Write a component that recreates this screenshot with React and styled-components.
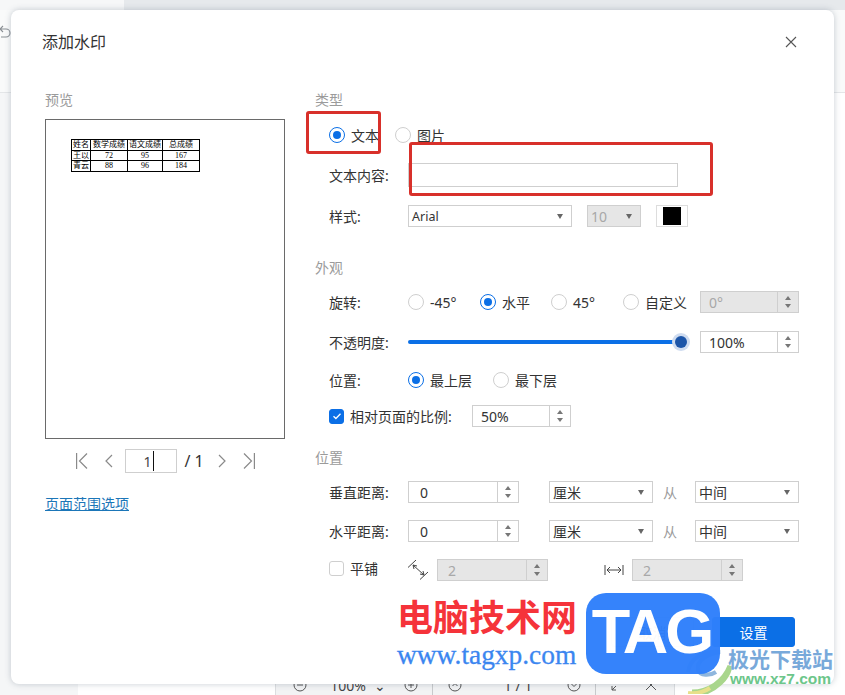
import React from 'react';
import styled, { createGlobalStyle } from 'styled-components';

const GlobalStyle = createGlobalStyle`
  html, body { margin: 0; padding: 0; }
  body {
    font-family: "Noto Sans", "Noto Sans CJK SC", sans-serif;
    font-size: 14px;
    color: #333;
  }
  * { box-sizing: border-box; }
`;

const Page = styled.div`
  position: relative;
  width: 845px;
  height: 695px;
  overflow: hidden;
  display: flex;
  flex-direction: column;
  background: #fff;
`;

const TopStrip = styled.div`
  height: 10px;
  flex: none;
  display: flex;
  background: #e6e9ec;
`;

const TopStripLeft = styled.div`
  width: 124px;
  background: #f6f7f8;
`;

const Ribbon = styled.div`
  height: 83px;
  flex: none;
  padding: 14px 0 0 0;
  background: #f9fafa;
  border-bottom: 1px solid #e4e6e8;
  color: #8a8f94;
`;

const Workspace = styled.div`
  flex: 1;
  display: flex;
  align-items: flex-end;
  background: #fff;
`;

const Sidebar = styled.div`
  width: 78px;
  height: 100%;
  background: #f5f6f7;
  flex: none;
`;

const ZoomBar = styled.div`
  margin-left: 197px;
  width: 400px;
  height: 20px;
  display: flex;
  align-items: center;
  background: #f2f3f4;
  border-left: 1px solid #dcdee0;
  border-right: 1px solid #dcdee0;
  color: #444;
  font-size: 14px;
`;

const ZoomSlot = styled.span`
  flex: none;
  display: flex;
  justify-content: center;
  width: ${({ $w }) => $w}px;
  height: 20px;
  align-items: center;
  ${({ $divider }) => $divider && 'border-right: 1px solid #c8cacc;'}
`;

const Dialog = styled.div`
  position: absolute;
  left: 11px;
  top: 10px;
  width: 823px;
  height: 674px;
  background: #fff;
  border-radius: 8px;
  box-shadow: 0 0 6px rgba(60, 80, 100, 0.28);
  display: flex;
  flex-direction: column;
`;

const Header = styled.div`
  height: 80px;
  flex: none;
  display: flex;
  justify-content: space-between;
  padding: 20px 37px 0 31px;
`;

const Title = styled.div`
  font-size: 16px;
  line-height: 24px;
  color: #333;
`;

const CloseButton = styled.button`
  width: 12px;
  height: 24px;
  padding: 0;
  border: none;
  background: none;
  color: #555;
  display: flex;
  align-items: center;
`;

const Body = styled.div`
  display: grid;
  grid-template-columns: 270px 484px;
  padding-left: 34px;
`;

const SectionLabel = styled.div`
  line-height: 20px;
  height: 20px;
  font-size: 14px;
  color: #9b9b9b;
  margin-top: ${({ $mt }) => $mt || 0}px;
`;

const PreviewBox = styled.div`
  margin-top: 9px;
  width: 240px;
  height: 320px;
  border: 1px solid #6a6a6a;
  padding: 19px 0 0 25px;
`;

const SheetTable = styled.table`
  border-collapse: collapse;
  table-layout: fixed;
  width: 128px;
  font-family: "Liberation Serif", "Noto Sans CJK SC", serif;
  font-size: 8px;
  color: #000;

  td {
    border: 1px solid #000;
    height: 10.6px;
    padding: 0;
    line-height: 9px;
    text-align: center;
    overflow: hidden;
    white-space: nowrap;
  }
`;

const Pager = styled.div`
  margin-top: 10px;
  width: 240px;
  height: 24px;
  display: flex;
  justify-content: center;
  align-items: center;
  color: #8a8a8a;
`;

const PagerIcon = styled.svg`
  flex: none;
  margin-left: ${({ $ml }) => $ml || 0}px;
`;

const PageInput = styled.div`
  margin-left: 12px;
  width: 52px;
  height: 24px;
  border: 1px solid #cfcfcf;
  display: flex;
  align-items: center;
  justify-content: flex-end;
  padding-right: 22px;
  font-size: 14px;
  color: #444;
`;

const Caret = styled.span`
  width: 1px;
  height: 20px;
  margin-left: 1px;
  background: #111;
  flex: none;
`;

const PageTotal = styled.span`
  margin-left: 8px;
  font-size: 16px;
  color: #333;
  white-space: nowrap;
  width: 19px;
`;

const RangeLink = styled.a`
  display: block;
  margin-top: 21px;
  line-height: 20px;
  font-size: 14px;
  color: #1b76b8;
  text-decoration: underline;
`;

const Row = styled.div`
  display: flex;
  align-items: center;
  height: 24px;
  padding-left: 14px;
  margin-top: ${({ $mt }) => $mt || 0}px;
`;

const RowLabel = styled.span`
  flex: none;
  width: 79px;
  font-size: 14px;
  color: #333;
`;

const Option = styled.label`
  flex: none;
  display: flex;
  align-items: center;
  gap: 6px;
  width: ${({ $w }) => $w}px;
  font-size: 14px;
  color: #333;
  white-space: nowrap;
`;

const Radio = styled.span`
  flex: none;
  width: 16px;
  height: 16px;
  border-radius: 50%;
  border: 1px solid ${({ $on }) => ($on ? '#0b6fe6' : '#cfcfcf')};
  display: flex;
  align-items: center;
  justify-content: center;

  &::after {
    content: '';
    width: 8px;
    height: 8px;
    border-radius: 50%;
    background: ${({ $on }) => ($on ? '#0b6fe6' : 'transparent')};
  }
`;

const CheckBox = styled.span`
  flex: none;
  width: 15px;
  height: 15px;
  margin-bottom: ${({ $lift }) => ($lift ? 4 : 0)}px;
  border-radius: 3px;
  border: 1px solid ${({ $on }) => ($on ? '#0b6fe6' : '#cfcfcf')};
  background: ${({ $on }) => ($on ? '#0b6fe6' : '#fff')};
  color: #fff;
  display: flex;
  align-items: center;
  justify-content: center;
`;

const TextField = styled.div`
  width: 270px;
  height: 24px;
  border: 1px solid #cfcfcf;
`;

const Field = styled.div`
  flex: none;
  display: flex;
  align-items: center;
  width: ${({ $w }) => $w}px;
  height: 22px;
  margin-left: ${({ $ml }) => $ml || 0}px;
  border: 1px solid #cfcfcf;
  background: ${({ $off }) => ($off ? '#e6e6e6' : '#fff')};
  color: ${({ $off }) => ($off ? '#a8a8a8' : '#333')};
  font-size: ${({ $size }) => $size || 14}px;
`;

const FieldText = styled.span`
  flex: 1;
  padding-left: ${({ $pl }) => $pl}px;
  white-space: nowrap;
`;

const SelectCaret = styled.span`
  flex: none;
  width: 0;
  height: 0;
  margin-right: 8px;
  border-left: 3px solid transparent;
  border-right: 3px solid transparent;
  border-top: 5px solid #666;
`;

const SpinArrows = styled.span`
  flex: none;
  width: 21px;
  height: 100%;
  border-left: 1px solid #cfcfcf;
  display: flex;
  flex-direction: column;
  align-items: center;
  justify-content: center;
  gap: 4px;

  &::before, &::after {
    content: '';
    width: 0;
    height: 0;
    border-left: 3px solid transparent;
    border-right: 3px solid transparent;
  }
  &::before { border-bottom: 4px solid #777; }
  &::after { border-top: 4px solid #777; }
`;

const Swatch = styled.div`
  flex: none;
  margin-left: 15px;
  width: 32px;
  height: 22px;
  border: 1px solid #ddd;
  display: flex;
  align-items: center;
  justify-content: center;

  &::after {
    content: '';
    width: 18px;
    height: 18px;
    background: #000;
  }
`;

const Slider = styled.div`
  position: relative;
  flex: none;
  width: 273px;
  height: 4px;
  border-radius: 2px;
  background: #0b6fe6;
  margin-right: 19px;
`;

const SliderThumb = styled.span`
  position: absolute;
  right: -6px;
  top: -4px;
  width: 12px;
  height: 12px;
  border-radius: 50%;
  background: #1c55a8;
  box-shadow: 0 0 0 3px #cfdcf0;
`;

const Joiner = styled.span`
  flex: none;
  width: 42px;
  padding-right: 8px;
  text-align: center;
  font-size: 14px;
  color: #9b9b9b;
`;

const TileLabel = styled.span`
  flex: none;
  width: 58px;
  padding-left: 6px;
  margin-bottom: 4px;
  font-size: 14px;
  color: #333;
`;

const ScaleLabel = styled.span`
  flex: none;
  width: 128px;
  padding-left: 6px;
  font-size: 14px;
  color: #333;
  white-space: nowrap;
`;

const TileIcon = styled.svg`
  flex: none;
  margin-left: ${({ $ml }) => $ml || 0}px;
  margin-right: ${({ $mr }) => $mr || 0}px;
  color: #444;
`;

const Footer = styled.div`
  margin-top: 35px;
  padding-right: 39px;
  display: flex;
  justify-content: flex-end;
  gap: 18px;
`;

const FooterButton = styled.button`
  width: 83px;
  height: 30px;
  border-radius: 3px;
  border: 1px solid ${({ $primary }) => ($primary ? '#0b6fe6' : '#dcdcdc')};
  background: ${({ $primary }) => ($primary ? '#0b6fe6' : '#fff')};
  color: ${({ $primary }) => ($primary ? '#fff' : '#333')};
  font-family: inherit;
  font-size: 14px;
  padding: 0;
`;

const Callout = styled.div`
  position: absolute;
  left: ${({ $x }) => $x}px;
  top: ${({ $y }) => $y}px;
  width: ${({ $w }) => $w}px;
  height: ${({ $h }) => $h}px;
  border: 3px solid #d8302a;
  border-radius: 3px;
`;

const WatermarkTitle = styled.div`
  position: absolute;
  left: 397px;
  top: 594px;
  font-family: "Noto Sans CJK SC", sans-serif;
  font-size: 36px;
  line-height: 42px;
  font-weight: 700;
  color: #f5333a;
  white-space: nowrap;
`;

const WatermarkUrl = styled.div`
  position: absolute;
  left: 397px;
  top: 640px;
  font-family: "Liberation Serif", serif;
  font-size: 27.4px;
  line-height: 30px;
  color: #3b86f0;
  -webkit-text-stroke: 0.3px #3b86f0;
  white-space: nowrap;
`;

const TagBadge = styled.div`
  position: absolute;
  left: 586px;
  top: 593px;
  width: 134px;
  height: 81px;
  border-radius: 20px;
  background: #2f80fb;
  color: #fff;
  opacity: 0.97;
  font-family: "Liberation Sans", sans-serif;
  font-size: 63px;
  font-weight: 700;
  line-height: 77px;
  padding-right: 3px;
  text-align: center;
  letter-spacing: -3px;
`;

const SwirlMark = styled.svg`
  position: absolute;
  left: 686px;
  top: 648px;
`;

const SideTitle = styled.div`
  position: absolute;
  left: 728px;
  top: 644px;
  font-family: "Noto Sans CJK SC", sans-serif;
  font-size: 21px;
  line-height: 28px;
  font-weight: 700;
  color: #78a9da;
  white-space: nowrap;
`;

const SideUrl = styled.div`
  position: absolute;
  left: 730px;
  top: 670px;
  font-family: "Liberation Sans", sans-serif;
  font-size: 15.5px;
  line-height: 18px;
  font-weight: 700;
  color: #6cc68a;
  white-space: nowrap;
`;

const Spin = ({ value, w, ml, off, pl = 8 }) => (
  <Field $w={w} $ml={ml} $off={off}>
    <FieldText $pl={pl}>{value}</FieldText>
    <SpinArrows />
  </Field>
);

const Select = ({ value, w, ml, off, size, pl = 3 }) => (
  <Field $w={w} $ml={ml} $off={off} $size={size}>
    <FieldText $pl={pl}>{value}</FieldText>
    <SelectCaret />
  </Field>
);

const CircleIcon = ({ d }) => (
  <svg width="14" height="14" viewBox="0 0 14 14" fill="none" stroke="#555" strokeWidth="1">
    <circle cx="7" cy="7" r="6" />
    <path d={d} />
  </svg>
);

const rows = [
  ['姓名', '数学成绩', '语文成绩', '总成绩'],
  ['王以', '72', '95', '167'],
  ['青云', '88', '96', '184'],
];

export default function App() {
  return (
    <Page>
      <GlobalStyle />
      <TopStrip>
        <TopStripLeft />
      </TopStrip>
      <Ribbon>
        <svg width="11" height="16" viewBox="0 0 11 16" fill="none" stroke="currentColor" strokeWidth="1.1">
          <path d="M0 5h6a4 4 0 0 1 0 8H1M3 2L0 5l3 3" />
        </svg>
      </Ribbon>
      <Workspace>
        <Sidebar />
        <ZoomBar>
          <ZoomSlot $w={47}><CircleIcon d="M4 7h6" /></ZoomSlot>
          <ZoomSlot $w={50}>100%</ZoomSlot>
          <ZoomSlot $w={14}>⌄</ZoomSlot>
          <ZoomSlot $w={12} />
          <ZoomSlot $w={24}><CircleIcon d="M4 7h6M7 4v6" /></ZoomSlot>
          <ZoomSlot $w={10} $divider />
          <ZoomSlot $w={44}><CircleIcon d="M4.5 8L7 5.5 9.5 8" /></ZoomSlot>
          <ZoomSlot $w={82}>1 / 1</ZoomSlot>
          <ZoomSlot $w={30}><CircleIcon d="M4.5 6L7 8.5 9.5 6" /></ZoomSlot>
          <ZoomSlot $w={7} $divider />
          <ZoomSlot $w={42}>
            <svg width="14" height="14" viewBox="0 0 14 14" fill="none" stroke="#555">
              <path d="M2 12l4-4M2 8v4h4M12 2L8 6" />
            </svg>
          </ZoomSlot>
          <ZoomSlot $w={26}>
            <svg width="14" height="14" viewBox="0 0 14 14" fill="none" stroke="#555">
              <path d="M2 2l10 10M12 2L2 12" />
            </svg>
          </ZoomSlot>
        </ZoomBar>
      </Workspace>

      <Dialog>
        <Header>
          <Title>添加水印</Title>
          <CloseButton aria-label="关闭">
            <svg width="12" height="12" viewBox="0 0 12 12" stroke="currentColor" strokeWidth="1.1">
              <path d="M1 1l10 10M11 1L1 11" />
            </svg>
          </CloseButton>
        </Header>
        <Body>
          <div>
            <SectionLabel>预览</SectionLabel>
            <PreviewBox>
              <SheetTable>
                <colgroup>
                  <col style={{ width: 19 }} />
                  <col style={{ width: 37 }} />
                  <col style={{ width: 35 }} />
                  <col style={{ width: 37 }} />
                </colgroup>
                <tbody>
                  {rows.map((row) => (
                    <tr key={row[0]}>
                      {row.map((cell) => <td key={cell}>{cell}</td>)}
                    </tr>
                  ))}
                </tbody>
              </SheetTable>
            </PreviewBox>
            <Pager>
              <PagerIcon width="12" height="16" viewBox="0 0 12 16" fill="none" stroke="currentColor" strokeWidth="1.2">
                <path d="M0.6 0v16M11 0.5L3.5 8l7.5 7.5" />
              </PagerIcon>
              <PagerIcon $ml={17} width="8" height="14" viewBox="0 0 8 14" fill="none" stroke="currentColor" strokeWidth="1.2">
                <path d="M7 1L1 7l6 6" />
              </PagerIcon>
              <PageInput>1<Caret /></PageInput>
              <PageTotal>/ 1</PageTotal>
              <PagerIcon $ml={14} width="8" height="14" viewBox="0 0 8 14" fill="none" stroke="currentColor" strokeWidth="1.2">
                <path d="M1 1l6 6-6 6" />
              </PagerIcon>
              <PagerIcon $ml={17} width="12" height="16" viewBox="0 0 12 16" fill="none" stroke="currentColor" strokeWidth="1.2">
                <path d="M11.4 0v16M1 0.5L8.5 8 1 15.5" />
              </PagerIcon>
            </Pager>
            <RangeLink>页面范围选项</RangeLink>
          </div>

          <div>
            <SectionLabel>类型</SectionLabel>
            <Row $mt={13}>
              <Option $w={66}><Radio $on />文本</Option>
              <Option $w={50}><Radio />图片</Option>
            </Row>
            <Row $mt={16}>
              <RowLabel>文本内容:</RowLabel>
              <TextField />
            </Row>
            <Row $mt={17}>
              <RowLabel>样式:</RowLabel>
              <Select value="Arial" w={164} size={12.5} />
              <Select value="10" w={54} ml={15} off pl={3} />
              <Swatch />
            </Row>

            <SectionLabel $mt={30}>外观</SectionLabel>
            <Row $mt={12}>
              <RowLabel>旋转:</RowLabel>
              <Option $w={72}><Radio />-45°</Option>
              <Option $w={71}><Radio $on />水平</Option>
              <Option $w={72}><Radio />45°</Option>
              <Option $w={77}><Radio />自定义</Option>
              <Spin value="0°" w={99} off />
            </Row>
            <Row $mt={16}>
              <RowLabel>不透明度:</RowLabel>
              <Slider><SliderThumb /></Slider>
              <Spin value="100%" w={99} />
            </Row>
            <Row $mt={14}>
              <RowLabel>位置:</RowLabel>
              <Option $w={85}><Radio $on />最上层</Option>
              <Option $w={70}><Radio />最下层</Option>
            </Row>
            <Row $mt={12}>
              <CheckBox $on>
                <svg width="10" height="10" viewBox="0 0 10 10" fill="none" stroke="currentColor" strokeWidth="1.3">
                  <path d="M1.5 5.2l2.4 2.3 4.6-4.8" />
                </svg>
              </CheckBox>
              <ScaleLabel>相对页面的比例:</ScaleLabel>
              <Spin value="50%" w={99} />
            </Row>

            <SectionLabel $mt={20}>位置</SectionLabel>
            <Row $mt={12}>
              <RowLabel>垂直距离:</RowLabel>
              <Spin value="0" w={111} pl={11} />
              <Select value="厘米" w={104} ml={30} />
              <Joiner>从</Joiner>
              <Select value="中间" w={104} />
            </Row>
            <Row $mt={15}>
              <RowLabel>水平距离:</RowLabel>
              <Spin value="0" w={111} pl={11} />
              <Select value="厘米" w={104} ml={30} />
              <Joiner>从</Joiner>
              <Select value="中间" w={104} />
            </Row>
            <Row $mt={15}>
              <CheckBox $lift />
              <TileLabel>平铺</TileLabel>
              <TileIcon $ml={6} $mr={9} width="20" height="20" viewBox="0 0 20 20" fill="none" stroke="currentColor">
                <path d="M0 7.5L8 0M12 19.5L20 12M5 5l11 10M5 5l1 4M5 5l4 1M16 15l-4-1M16 15l-1-4" />
              </TileIcon>
              <Spin value="2" w={111} off pl={10} />
              <TileIcon $ml={56} $mr={8} width="20" height="12" viewBox="0 0 20 12" fill="none" stroke="currentColor">
                <path d="M1 1v10M19 1v10M3 6h14M3 6l3-3M3 6l3 3M17 6l-3-3M17 6l-3 3" />
              </TileIcon>
              <Spin value="2" w={111} off pl={10} />
            </Row>
          </div>
        </Body>
        <Footer>
          <FooterButton>取消</FooterButton>
          <FooterButton $primary>设置</FooterButton>
        </Footer>
      </Dialog>

      <Callout $x={306} $y={111} $w={75} $h={43} />
      <Callout $x={409} $y={142} $w={304} $h={54} />

      <WatermarkTitle>电脑技术网</WatermarkTitle>
      <WatermarkUrl>www.tagxp.com</WatermarkUrl>
      <SwirlMark width="46" height="46" viewBox="0 0 46 46" fill="none">
        <path d="M2 24C4 10 18 2 34 4C22 6 10 12 12 22C14 28 24 28 30 24" stroke="#8fb6dd" strokeWidth="4" />
        <path d="M6 44C22 44 38 34 44 18C42 30 30 42 14 46" stroke="#a9d68c" strokeWidth="5" />
        <path d="M2 45C10 46 18 44 24 40" stroke="#e7e08a" strokeWidth="4" />
      </SwirlMark>
      <TagBadge>TAG</TagBadge>
      <SideTitle>极光下载站</SideTitle>
      <SideUrl>www.xz7.com</SideUrl>
    </Page>
  );
}
